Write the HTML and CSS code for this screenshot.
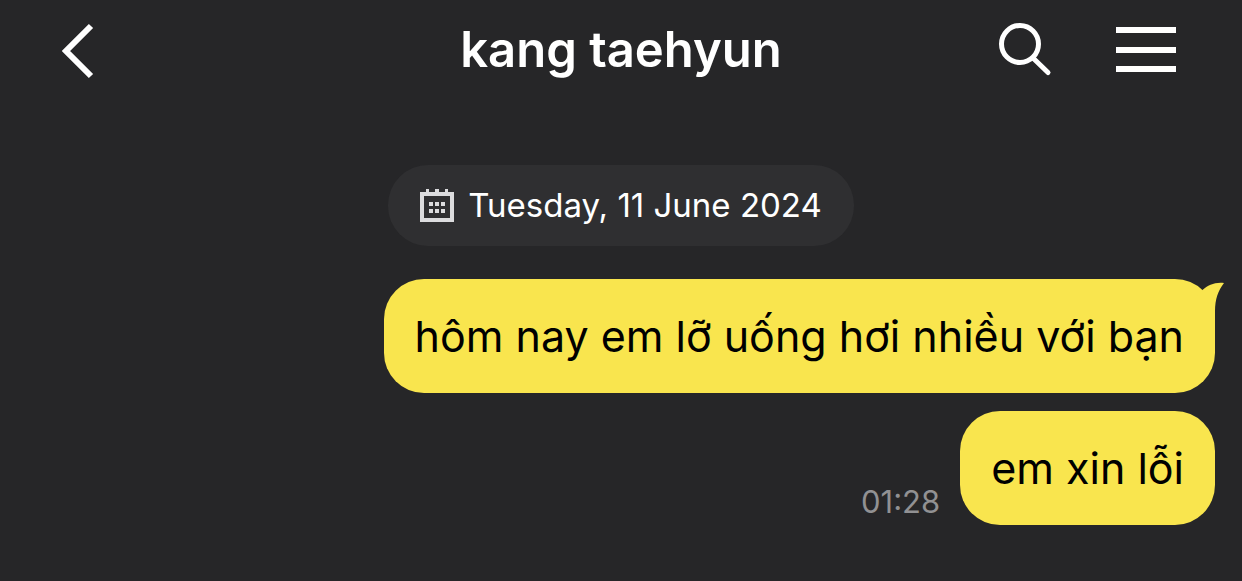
FILE: index.html
```html
<!DOCTYPE html>
<html lang="vi">
<head>
    <meta charset="utf-8">
    <title>kang taehyun</title>
    <meta name="viewport" content="width=device-width, initial-scale=1">
    <link rel="stylesheet" href="styles.css">
</head>
<body>

<!-- Top bar -->
<header class="header">
    <button class="icon-btn" type="button" aria-label="Back">
        <svg width="34" height="58" viewBox="0 0 34 58">
            <path d="M30 5 L5 30 L30 55" fill="none" stroke="#fff" stroke-width="6"/>
        </svg>
    </button>
    <h1 class="title">kang taehyun</h1>
    <div class="actions">
        <button class="icon-btn" type="button" aria-label="Search">
            <svg width="54" height="54" viewBox="0 0 54 54" fill="none" stroke="#fff" stroke-width="5">
                <circle cx="22" cy="21" r="18.5"/>
                <path d="M35 35 L50 49.500" stroke-linecap="round"/>
            </svg>
        </button>
        <button class="icon-btn" type="button" aria-label="Menu">
            <svg width="60" height="46" viewBox="0 0 60 46" fill="#fff">
                <rect width="60" height="6"/>
                <rect y="20" width="60" height="6"/>
                <rect y="39" width="60" height="6"/>
            </svg>
        </button>
    </div>
</header>

<!-- Conversation -->
<main class="chat">
    <div class="date">
        <svg width="34" height="34" viewBox="0 0 34 34" fill="#dcdcde">
            <path fill-rule="evenodd" d="M0 3 H34 V33 H0 Z M4 7 V29 H30 V7 Z"/>
            <path d="M6 0h3v4h-3z M15 0h4v4h-4z M25 0h3v4h-3z"/>
            <path d="M9 13h4v4h-4z M15 13h4v4h-4z M21 13h4v4h-4z M9 20h4v4h-4z M15 20h4v4h-4z M21 20h4v4h-4z"/>
        </svg>
        <time datetime="2024-06-11">Tuesday, 11 June 2024</time>
    </div>

    <div class="message">
        <p class="bubble">
            hôm nay em lỡ uống hơi nhiều với bạn
            <svg class="tail" width="40" height="48" viewBox="0 0 40 48" fill="#f9e54e">
                <path d="M10 20 L17.500 11 C23 6 30 3 39 4 C33 12 30 20 30 32 V48 H0 Z"/>
            </svg>
        </p>
    </div>
    <div class="message">
        <time class="time">01:28</time>
        <p class="bubble">em xin lỗi</p>
    </div>
</main>

</body>
</html>
```
FILE: styles.css
```css
body {
    margin: 0;
    background-color: #262628;
    color: white;
    font-family: Inter, "Liberation Sans", sans-serif;
}

/* Top bar */
.header {
    display: grid;
    grid-template-columns: 1fr auto 1fr;
    align-items: center;
    height: 100px;
    padding: 0 61px;
}

.title {
    margin: 0;
    font-size: 49px;
    line-height: 60px;
    font-weight: 600;
}

.actions {
    display: flex;
    align-items: center;
    justify-content: flex-end;
    gap: 64px;
    padding-right: 5px;
}

.icon-btn {
    display: flex;
    justify-self: start;
    padding: 0;
    border: none;
    background: none;
}

/* Conversation */
.chat {
    display: flex;
    flex-direction: column;
    gap: 18px;
    padding: 65px 27px 56px;
}

.date {
    display: flex;
    align-items: center;
    align-self: center;
    gap: 14px;
    margin-bottom: 15px;
    padding: 20px 32px;
    border-radius: 40px;
    background-color: #2f2f31;
    font-size: 33px;
    line-height: 41px;
}

.message {
    display: flex;
    align-items: flex-end;
    justify-content: flex-end;
    gap: 20px;
}

.bubble {
    position: relative;
    margin: 0;
    padding: 29px 31px;
    border-radius: 40px;
    background-color: #f9e54e;
    color: black;
    font-size: 43px;
    line-height: 56px;
}

/* small horn on the first bubble of a group */
.tail {
    position: absolute;
    top: 0;
    right: -10px;
}

.time {
    padding-bottom: 5px;
    color: #919193;
    font-size: 31px;
    line-height: 36px;
}
```
